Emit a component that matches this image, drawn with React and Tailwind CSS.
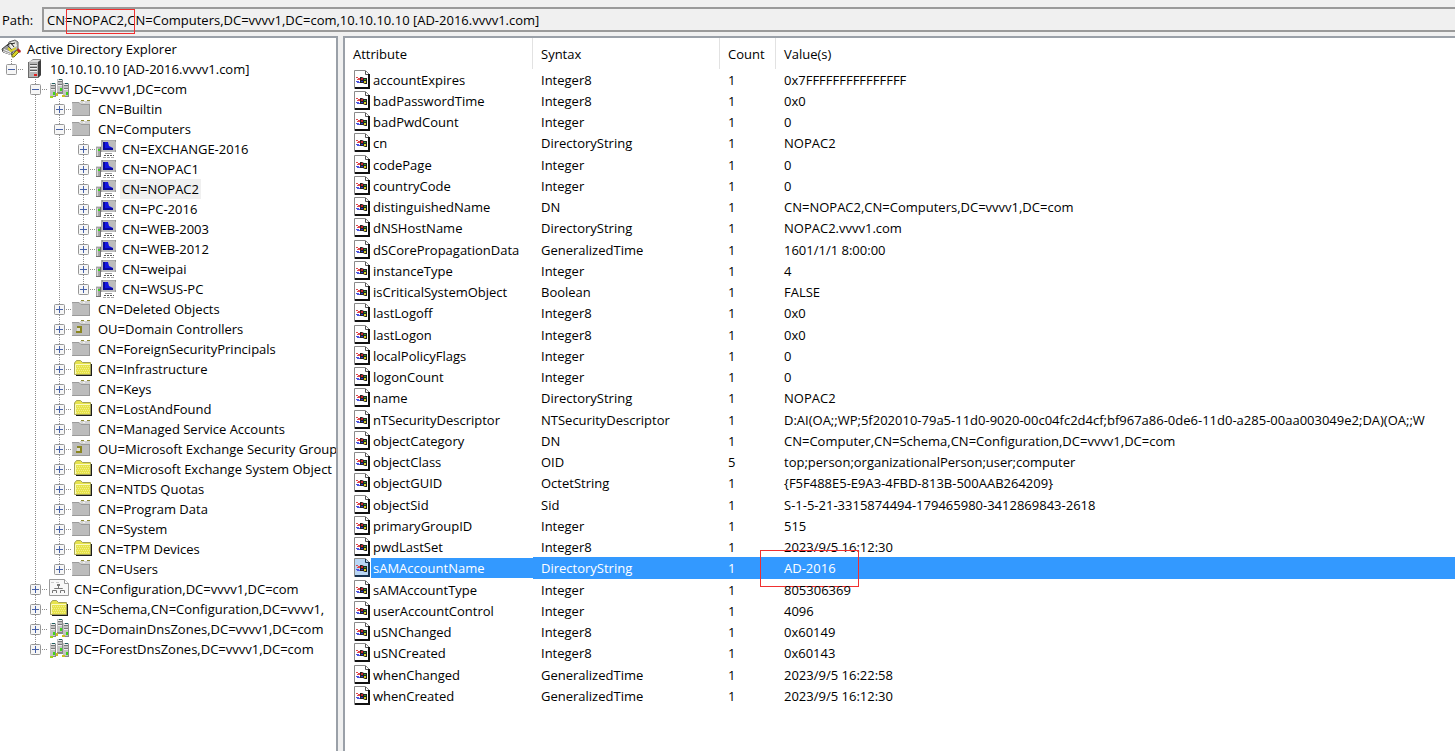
import React, { useState } from 'react';

const treeItems = [
    { level: 1, icon: 'server', open: true, text: '10.10.10.10 [AD-2016.vvvv1.com]', last: true },
    { level: 2, icon: 'domain', open: true, text: 'DC=vvvv1,DC=com' },
    { level: 3, icon: 'container', text: 'CN=Builtin' },
    { level: 3, icon: 'container', open: true, text: 'CN=Computers' },
    { level: 4, icon: 'computer', text: 'CN=EXCHANGE-2016' },
    { level: 4, icon: 'computer', text: 'CN=NOPAC1' },
    { level: 4, icon: 'computer', text: 'CN=NOPAC2', selected: true },
    { level: 4, icon: 'computer', text: 'CN=PC-2016' },
    { level: 4, icon: 'computer', text: 'CN=WEB-2003' },
    { level: 4, icon: 'computer', text: 'CN=WEB-2012' },
    { level: 4, icon: 'computer', text: 'CN=weipai' },
    { level: 4, icon: 'computer', text: 'CN=WSUS-PC', last: true },
    { level: 3, icon: 'container', text: 'CN=Deleted Objects' },
    { level: 3, icon: 'ou', text: 'OU=Domain Controllers' },
    { level: 3, icon: 'container', text: 'CN=ForeignSecurityPrincipals' },
    { level: 3, icon: 'folder', text: 'CN=Infrastructure' },
    { level: 3, icon: 'container', text: 'CN=Keys' },
    { level: 3, icon: 'folder', text: 'CN=LostAndFound' },
    { level: 3, icon: 'container', text: 'CN=Managed Service Accounts' },
    { level: 3, icon: 'ou', text: 'OU=Microsoft Exchange Security Group' },
    { level: 3, icon: 'folder', text: 'CN=Microsoft Exchange System Object' },
    { level: 3, icon: 'folder', text: 'CN=NTDS Quotas' },
    { level: 3, icon: 'container', text: 'CN=Program Data' },
    { level: 3, icon: 'container', text: 'CN=System' },
    { level: 3, icon: 'folder', text: 'CN=TPM Devices' },
    { level: 3, icon: 'container', text: 'CN=Users', last: true },
    { level: 2, icon: 'config', text: 'CN=Configuration,DC=vvvv1,DC=com' },
    { level: 2, icon: 'folder', text: 'CN=Schema,CN=Configuration,DC=vvvv1,' },
    { level: 2, icon: 'domain', text: 'DC=DomainDnsZones,DC=vvvv1,DC=com' },
    { level: 2, icon: 'domain', text: 'DC=ForestDnsZones,DC=vvvv1,DC=com', last: true },
];

const attributes = [
    ['accountExpires', 'Integer8', '1', '0x7FFFFFFFFFFFFFFF'],
    ['badPasswordTime', 'Integer8', '1', '0x0'],
    ['badPwdCount', 'Integer', '1', '0'],
    ['cn', 'DirectoryString', '1', 'NOPAC2'],
    ['codePage', 'Integer', '1', '0'],
    ['countryCode', 'Integer', '1', '0'],
    ['distinguishedName', 'DN', '1', 'CN=NOPAC2,CN=Computers,DC=vvvv1,DC=com'],
    ['dNSHostName', 'DirectoryString', '1', 'NOPAC2.vvvv1.com'],
    ['dSCorePropagationData', 'GeneralizedTime', '1', '1601/1/1 8:00:00'],
    ['instanceType', 'Integer', '1', '4'],
    ['isCriticalSystemObject', 'Boolean', '1', 'FALSE'],
    ['lastLogoff', 'Integer8', '1', '0x0'],
    ['lastLogon', 'Integer8', '1', '0x0'],
    ['localPolicyFlags', 'Integer', '1', '0'],
    ['logonCount', 'Integer', '1', '0'],
    ['name', 'DirectoryString', '1', 'NOPAC2'],
    ['nTSecurityDescriptor', 'NTSecurityDescriptor', '1', 'D:AI(OA;;WP;5f202010-79a5-11d0-9020-00c04fc2d4cf;bf967a86-0de6-11d0-a285-00aa003049e2;DA)(OA;;W'],
    ['objectCategory', 'DN', '1', 'CN=Computer,CN=Schema,CN=Configuration,DC=vvvv1,DC=com'],
    ['objectClass', 'OID', '5', 'top;person;organizationalPerson;user;computer'],
    ['objectGUID', 'OctetString', '1', '{F5F488E5-E9A3-4FBD-813B-500AAB264209}'],
    ['objectSid', 'Sid', '1', 'S-1-5-21-3315874494-179465980-3412869843-2618'],
    ['primaryGroupID', 'Integer', '1', '515'],
    ['pwdLastSet', 'Integer8', '1', '2023/9/5 16:12:30'],
    ['sAMAccountName', 'DirectoryString', '1', 'AD-2016'],
    ['sAMAccountType', 'Integer', '1', '805306369'],
    ['userAccountControl', 'Integer', '1', '4096'],
    ['uSNChanged', 'Integer8', '1', '0x60149'],
    ['uSNCreated', 'Integer8', '1', '0x60143'],
    ['whenChanged', 'GeneralizedTime', '1', '2023/9/5 16:22:58'],
    ['whenCreated', 'GeneralizedTime', '1', '2023/9/5 16:12:30'],
];

const RootIcon = () => (
    <svg width="24" height="20" viewBox="0 0 24 20" className="shrink-0">
        <path d="M9 3 L15 1 L18 3 L18 10 L12 14 L7 11 Z" fill="#b9b9b9" stroke="#666" />
        <path d="M9 4 L15 2 L17 7 L11 10 Z" fill="#ecece4" />
        <path d="M2 10 L7 6 L12 11 L12 16 L3 13 Z" fill="#9a9a9a" stroke="#444" />
        <path d="M3 12.5 L11 15.5 M4 10.5 L11 13.5" stroke="#f5f5f5" />
        <path d="M7 6 L11 4 L14 8 M11 5 L15 4" fill="none" stroke="#222" />
        <path d="M8 9 L11 12 L16 9" fill="none" stroke="#d8d326" strokeWidth="2" />
        <path d="M12 16 L18 10 L20 12 L14 18 L12 18 Z" fill="#d8d326" stroke="#77741d" />
        <path d="M18 9 L21 12 L20 14 L17 12 Z" fill="#b3252a" />
    </svg>
);

const ServerIcon = () => (
    <>
        <path d="M5 3 L9 0 H17 V16 L14 19 H5 Z" fill="#8a8a8a" />
        <path d="M5 3 L9 1 H16 L14 3 Z" fill="#dcdcdc" />
        <rect x="5" y="3" width="9" height="16" fill="#b4b4b4" />
        <path d="M14 3 L17 1 V16 L14 19 Z" fill="#3e3e3e" />
        <path d="M6 5.5 H13 M6 8.5 H13 M6 11.5 H13" stroke="#5a5a5a" />
        <path d="M6 6.5 H13 M6 9.5 H13 M6 12.5 H13" stroke="#efefef" />
        <path d="M5 18.5 H14 M4.5 3 V19" stroke="#6a6a6a" />
        <rect x="10" y="15" width="3" height="2" fill="#e02020" />
    </>
);

const Tower = ({ x, y }) => (
    <g transform={`translate(${x} ${y})`}>
        <rect width="6" height="14" fill="#c2c2c2" />
        <path d="M5.5 1 V14 M0 13.5 H6" stroke="#8a8a8a" />
        <path d="M1 2.5 H5 M1 5.5 H5" stroke="#7a7a7a" />
        <path d="M1 1.5 H5 M1 6.5 H5" stroke="#ececec" />
        <rect x="2" y="0" width="3" height="1" fill="#1f5f5f" />
        <rect x="3" y="9" width="2" height="3" fill="#3fd51c" />
    </g>
);

const DomainIcon = () => (
    <>
        <Tower x={9} y={0} />
        <Tower x={2} y={4} />
        <Tower x={15} y={4} />
        <path d="M8 14.5 H15" stroke="#8a8a8a" />
        <rect x="8" y="14" width="2" height="3" fill="#c9c222" />
        <rect x="14" y="16" width="3" height="2" fill="#c9c222" />
        <rect x="2" y="17" width="3" height="2" fill="#9ed51c" />
    </>
);

const ContainerIcon = () => (
    <>
        <path d="M0 4 L1 3 H7 L9 5 H18 V17 H0 Z" fill="#bcbcbc" />
        <path d="M8 2 H18 V5 H9 Z" fill="#d2d2d2" />
        <path d="M0 3.5 H7 L9 5.5 H18" fill="none" stroke="#9c9c9c" />
        <path d="M17.5 5 V17 M0 16.5 H18" stroke="#9a9a9a" />
        <path d="M0.5 5 V16" stroke="#cacaca" />
        <path d="M9 1.5 H12 M15 1.5 H18" stroke="#8c8a35" />
        <path d="M11 3.5 H13" stroke="#f4f4f4" />
    </>
);

const OuIcon = () => (
    <>
        <ContainerIcon />
        <path d="M5 7 H10 V14 H4 V12 H8 V9 H5 Z" fill="#8a8620" />
        <path d="M5 9 H8 V12 H5 Z" fill="#deded0" />
    </>
);

const FolderIcon = () => (
    <>
        <path d="M4 5 H20 V17 H4 Z" fill="#1c1c1c" />
        <path d="M2.5 15.5 V4 L4.5 1.5 H8.5 L10.5 3.5 H18.5 V15.5 Z" fill="#e6e34c" stroke="#a3a15a" />
        <path d="M3.5 15 V5.5 H18" fill="none" stroke="#fbfac0" />
        <path d="M5 7.5 H18 M4 9.5 H18 M5 11.5 H18 M4 13.5 H18" stroke="#f3f08a" strokeDasharray="1 1" />
    </>
);

const ComputerIcon = () => (
    <>
        <rect x="0" y="7" width="5" height="11" fill="#a4a4a4" />
        <path d="M0 7.5 H5 M1.5 9 V17" stroke="#d8d8d8" />
        <path d="M4.5 8 V18 M0 17.5 H5" stroke="#707070" />
        <rect x="2" y="10" width="2" height="2" fill="#3fd51c" />
        <rect x="5" y="1" width="15" height="12" fill="#bcbcbc" />
        <path d="M5 1.5 H20 M5.5 1 V13" stroke="#a8a8a8" />
        <path d="M7 3 H10 V9 H17 V11 H7 Z" fill="#0b0b9c" />
        <path d="M9 3 L12 3 L13 7 L17 9 H9 Z" fill="#1414e0" />
        <path d="M19 2 H20 M19 12 H20 M6 2 H7" stroke="#777" />
        <path d="M9 14.5 H16" stroke="#999" />
        <path d="M8 16.5 H18" stroke="#555" strokeDasharray="2 1" />
        <path d="M7 18.5 H18" stroke="#aaa" strokeDasharray="3 1" />
    </>
);

const ConfigIcon = () => (
    <>
        <path d="M1.5 0.5 H16.5 L20.5 4.5 V16.5 H1.5 Z" fill="#f8f8f8" stroke="#9a9a9a" />
        <path d="M16.5 0.5 V4.5 H20.5" fill="#fff" stroke="#9a9a9a" />
        <path d="M10.5 6 V9 M6.5 10 V9.5 H14.5 V10 M4.5 14 V11.5 H8.5 V14 M12.5 14 V11.5 H16.5 V14" fill="none" stroke="#777" />
        <rect x="9" y="5" width="3" height="2" fill="#777" />
        <path d="M3 3.5 H6 M8 3.5 H11" stroke="#c9c9c9" />
    </>
);

const icons = {
    server: ServerIcon,
    domain: DomainIcon,
    container: ContainerIcon,
    ou: OuIcon,
    folder: FolderIcon,
    computer: ComputerIcon,
    config: ConfigIcon,
};

// dotted connector cell, 24x20
const Guide = ({ line }) => (
    <svg width="24" height="20" className="shrink-0">
        {line && <path d="M11.5 0 V20" stroke="#8c8c8c" strokeDasharray="1 1" />}
    </svg>
);

const Expander = ({ open, last, name }) => (
    <button type="button" aria-label={`${open ? 'Collapse' : 'Expand'} ${name}`} className="shrink-0">
        <svg width="24" height="20">
            <path d={last ? 'M11.5 0 V10' : 'M11.5 0 V20'} stroke="#8c8c8c" strokeDasharray="1 1" />
            <path d="M18 10.5 H24" stroke="#8c8c8c" strokeDasharray="1 1" />
            <rect x="6.5" y="5.5" width="10" height="10" rx="1" fill="#f6f6f6" stroke="#979797" />
            <path d="M8 10.5 H15" stroke="#4560a8" />
            {!open && <path d="M11.5 7 V14" stroke="#4560a8" />}
        </svg>
    </button>
);

const TreeRow = ({ item }) => {
    const Icon = icons[item.icon];
    return (
        <li role="treeitem" aria-selected={!!item.selected} className="flex h-5 items-center whitespace-nowrap">
            {/* the server is the only level 1 node, so its column stays empty */}
            {Array.from({ length: item.level - 1 }, (_, i) => <Guide key={i} line={i > 0} />)}
            <Expander open={item.open} last={item.last} name={item.text} />
            <svg width="24" height="20" className="shrink-0"><Icon /></svg>
            <span className={item.selected ? 'bg-[#f0f0f0] px-0.5 leading-5' : 'px-0.5 leading-5'}>{item.text}</span>
        </li>
    );
};

const PageIcon = ({ selected }) => (
    <svg width="17" height="20" className="shrink-0">
        <path d="M0.5 0.5 H11.5 L15.5 4.5 V18.5 H0.5 Z" fill={selected ? '#b9d7f5' : '#ffffff'} stroke="#8a8a8a" />
        <path d="M11.5 1 V4.5 H15" fill="none" stroke={selected ? '#17324f' : '#555'} />
        <path d="M15 4 V18 H1" fill="none" stroke={selected ? '#17324f' : '#111'} strokeWidth="2" />
        <path d="M6 7 H8 L10 8 H13 V14 H11 L9 13 H6 Z" fill="#222" />
        <path d="M2 7.5 H4 M4 8.5 H6 M3 9.5 H6" stroke="#e0474b" />
        <path d="M2 11.5 H5 M3 12.5 H6" stroke="#4a54e0" />
        <rect x="7" y="8" width="2" height="2" fill="#c8262b" />
        <rect x="10" y="9" width="2" height="1" fill="#2ca32c" />
        <rect x="7" y="11" width="2" height="1" fill="#2a35d2" />
        <rect x="10" y="11" width="2" height="2" fill="#d9cf25" />
    </svg>
);

const AttributeRow = ({ row, selected, onSelect }) => {
    const [name, syntax, count, value] = row;
    const fill = selected ? 'bg-[#3399ff] text-white' : '';
    return (
        <tr onClick={onSelect} className="h-[21px] nth-[4n]:h-[22px]">
            <td className="p-0">
                <div className="flex h-full items-center pl-[9px]">
                    <PageIcon selected={selected} />
                    <span className={`h-full flex-1 pl-0.5 ${fill}`}>{name}</span>
                </div>
            </td>
            <td className={`p-0 pl-2 ${fill}`}>{syntax}</td>
            <td className={`p-0 pl-2 ${fill}`}>{count}</td>
            <td className={`relative p-0 pl-2 ${fill}`}>
                {value}
                {name === 'sAMAccountName' && (
                    <span className="pointer-events-none absolute -top-[7px] -left-4 h-[37px] w-[99px] border border-[#f03030]" />
                )}
            </td>
        </tr>
    );
};

const App = () => {
    const [selected, setSelected] = useState('sAMAccountName');

    return (
        <div className="flex h-screen flex-col overflow-hidden bg-[#f0f0f0] font-['Open_Sans',sans-serif] text-[13px] leading-5 text-black">
            <div className="flex items-center pt-[7px] pb-1">
                <label htmlFor="path" className="w-[42px] pl-0.5">Path:</label>
                <div className="relative flex-1">
                    <input
                        id="path"
                        readOnly
                        value="CN=NOPAC2,CN=Computers,DC=vvvv1,DC=com,10.10.10.10 [AD-2016.vvvv1.com]"
                        className="block h-[25px] w-full border-2 border-r-0 border-[#9a9a9a] bg-[#f0f0f0] pl-[3px] outline-none"
                    />
                    <span className="pointer-events-none absolute top-0.5 left-6 h-[25px] w-[69px] border border-[#f03030]" />
                </div>
            </div>

            <div className="flex min-h-0 flex-1">
                <div className="w-[338px] shrink-0 overflow-hidden border-t-2 border-r-2 border-[#9aa0a8] bg-white pt-px">
                    <ul role="tree">
                        <li role="treeitem" className="flex h-5 items-center whitespace-nowrap">
                            <RootIcon />
                            <span className="pl-[3px]">Active Directory Explorer</span>
                        </li>
                        {treeItems.map((item) => <TreeRow key={item.text} item={item} />)}
                    </ul>
                </div>

                <div className="ml-[5px] min-w-0 flex-1 overflow-hidden border-t-2 border-l-2 border-[#9aa0a8] bg-white">
                    <table className="w-full table-fixed border-separate border-spacing-0 text-left whitespace-nowrap">
                        <thead>
                            <tr className="h-[31px]">
                                <th className="w-[188px] border-r border-[#e2e2e2] p-0 pl-2 font-normal">Attribute</th>
                                <th className="w-[187px] border-r border-[#e2e2e2] p-0 pl-2 font-normal">Syntax</th>
                                <th className="w-14 border-r border-[#e2e2e2] p-0 pl-2 font-normal">Count</th>
                                <th className="p-0 pl-2 font-normal">Value(s)</th>
                            </tr>
                        </thead>
                        <tbody>
                            {attributes.map((row) => (
                                <AttributeRow
                                    key={row[0]}
                                    row={row}
                                    selected={row[0] === selected}
                                    onSelect={() => setSelected(row[0])}
                                />
                            ))}
                        </tbody>
                    </table>
                </div>
            </div>
        </div>
    );
};

export default App;
